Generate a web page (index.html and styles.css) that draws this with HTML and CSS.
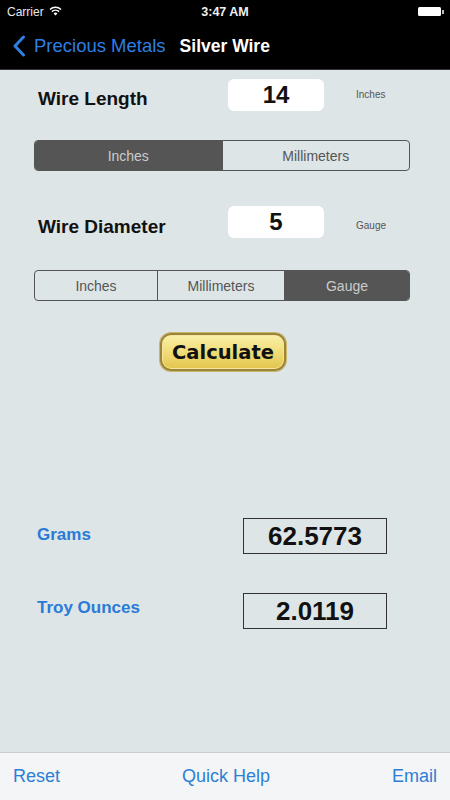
FILE: index.html
```html
<!DOCTYPE html>
<html>
<head>
<meta charset="utf-8">
<link rel="stylesheet" href="styles.css">
</head>
<body>
<div class="phone">
  <div class="status">
    <div class="carrier">Carrier
      <svg class="wifi" width="13" height="10" viewBox="0 0 13 10">
        <path d="M6.5 9.5 L4.6 7.4 A2.8 2.8 0 0 1 8.4 7.4 Z" fill="#fff"/>
        <path d="M2.9 5.6 A5.2 5.2 0 0 1 10.1 5.6" stroke="#fff" stroke-width="1.5" fill="none"/>
        <path d="M1 3.5 A7.8 7.8 0 0 1 12 3.5" stroke="#fff" stroke-width="1.5" fill="none"/>
      </svg>
    </div>
    <div class="time">3:47 AM</div>
    <div class="battery"><span class="cell"></span><span class="nub"></span></div>
  </div>
  <div class="nav">
    <svg class="chev" width="14" height="22" viewBox="0 0 14 22"><path d="M11.5 2 L3 11 L11.5 20" stroke="#2d7fe0" stroke-width="3" fill="none" stroke-linecap="round" stroke-linejoin="round"/></svg>
    <span class="back">Precious Metals</span>
    <span class="title">Silver Wire</span>
  </div>
  <div class="main">
    <div class="row row1">
      <div class="label">Wire Length</div>
      <div class="input">14</div>
      <div class="unit">Inches</div>
    </div>
    <div class="seg seg1">
      <div class="opt on">Inches</div>
      <div class="opt">Millimeters</div>
    </div>
    <div class="row row2">
      <div class="label">Wire Diameter</div>
      <div class="input">5</div>
      <div class="unit">Gauge</div>
    </div>
    <div class="seg seg2">
      <div class="opt o1">Inches</div>
      <div class="opt o2">Millimeters</div>
      <div class="opt o3 on">Gauge</div>
    </div>
    <div class="calc">Calculate</div>
    <div class="res res1">
      <div class="rlabel">Grams</div>
      <div class="rbox">62.5773</div>
    </div>
    <div class="res res2">
      <div class="rlabel">Troy Ounces</div>
      <div class="rbox">2.0119</div>
    </div>
  </div>
  <div class="toolbar">
    <span class="tb">Reset</span>
    <span class="tb">Quick Help</span>
    <span class="tb">Email</span>
  </div>
</div>
</body>
</html>
```
FILE: styles.css
```css
html, body { margin: 0; padding: 0; }
body { font-family: "Liberation Sans", Arial, sans-serif; width: 450px; height: 800px; overflow: hidden; }
.phone { width: 450px; height: 800px; display: flex; flex-direction: column; }

.status { height: 20px; box-sizing: border-box; padding-top: 3px; background: #000; color: #fff; display: flex; align-items: center; position: relative; font-size: 12px; }
.carrier { padding-left: 7px; display: flex; align-items: center; gap: 5px; color: #e8e8e8; }
.wifi { margin-top: -2px; }
.time { position: absolute; left: 0; right: 0; top: 5px; text-align: center; font-weight: bold; font-size: 12.5px; color: #f0f0f0; }
.battery { margin-left: auto; margin-right: 6px; display: flex; align-items: center; }
.cell { width: 23px; height: 9px; background: #fff; border-radius: 1.5px; }
.nub { width: 2px; height: 4px; background: #bbb; margin-left: 1px; }

.nav { height: 50px; background: #000; display: flex; align-items: center; border-bottom: 1px solid #333; box-sizing: border-box; padding-top: 3px; }
.chev { margin-left: 12px; margin-top: -1px; }
.back { color: #2d7fe0; font-size: 18.5px; margin-left: 8px; }
.title { color: #fff; font-weight: bold; font-size: 17.5px; margin-left: 14px; }

.main { flex: 1; background: #dde5e7; display: flex; flex-direction: column; }

.row { display: flex; align-items: center; padding-left: 38px; height: 32px; }
.row1 { margin-top: 9px; }
.row2 { margin-top: 35px; }
.label { width: 190px; font-weight: bold; font-size: 19px; color: #111; padding-top: 8px; }
.row2 .label { padding-top: 9px; }
.input { width: 96px; height: 32px; background: #fff; border-radius: 6px; text-align: center; font-weight: bold; font-size: 24px; line-height: 32px; color: #111; }
.unit { margin-left: 32px; font-size: 10px; color: #555; margin-top: -2px; }
.row2 .unit { margin-top: 6px; }

.seg { display: flex; margin-left: 34px; width: 376px; height: 31px; border: 1px solid #555; border-radius: 4px; box-sizing: border-box; overflow: hidden; }
.seg1 { margin-top: 29px; }
.seg2 { margin-top: 32px; }
.opt { flex: 1; display: flex; align-items: center; justify-content: center; font-size: 14px; color: #555; }
.opt + .opt { border-left: 1px solid #555; }
.opt.on { background: #555; color: #ccc; }
.o1 { flex: 0 0 122px; }
.o2 { flex: 0 0 126px; }
.o3 { flex: 1; }

.calc { margin-top: 32px; margin-left: 160px; width: 126px; height: 38px; box-sizing: border-box; border-radius: 11px; border: 2px solid #9c8536; box-shadow: 0 0 0 1px #c9b66c, inset 0 0 0 1px #f4e4a0; background: linear-gradient(#faf0a8 0%, #f0dc78 50%, #e3c54d 100%); display: flex; align-items: center; justify-content: center; font-family: "DejaVu Sans", Verdana, sans-serif; font-weight: bold; font-size: 19.5px; color: #111; }

.res { display: flex; align-items: center; padding-left: 37px; }
.res1 { margin-top: 147px; }
.res2 { margin-top: 39px; }
.rlabel { width: 206px; font-weight: bold; font-size: 17px; color: #2a7ad8; margin-top: -3px; }
.res2 .rlabel { margin-top: -6px; }
.rbox { width: 144px; height: 36px; box-sizing: border-box; border: 1.5px solid #333; display: flex; align-items: center; justify-content: center; font-weight: bold; font-size: 26px; color: #111; }

.toolbar { height: 48px; box-sizing: border-box; background: #f3f5f6; border-top: 1px solid #c8cdcf; display: flex; align-items: center; justify-content: space-between; padding: 0 13px 0 13px; }
.tb { color: #2d7fd6; font-size: 18px; }
```
